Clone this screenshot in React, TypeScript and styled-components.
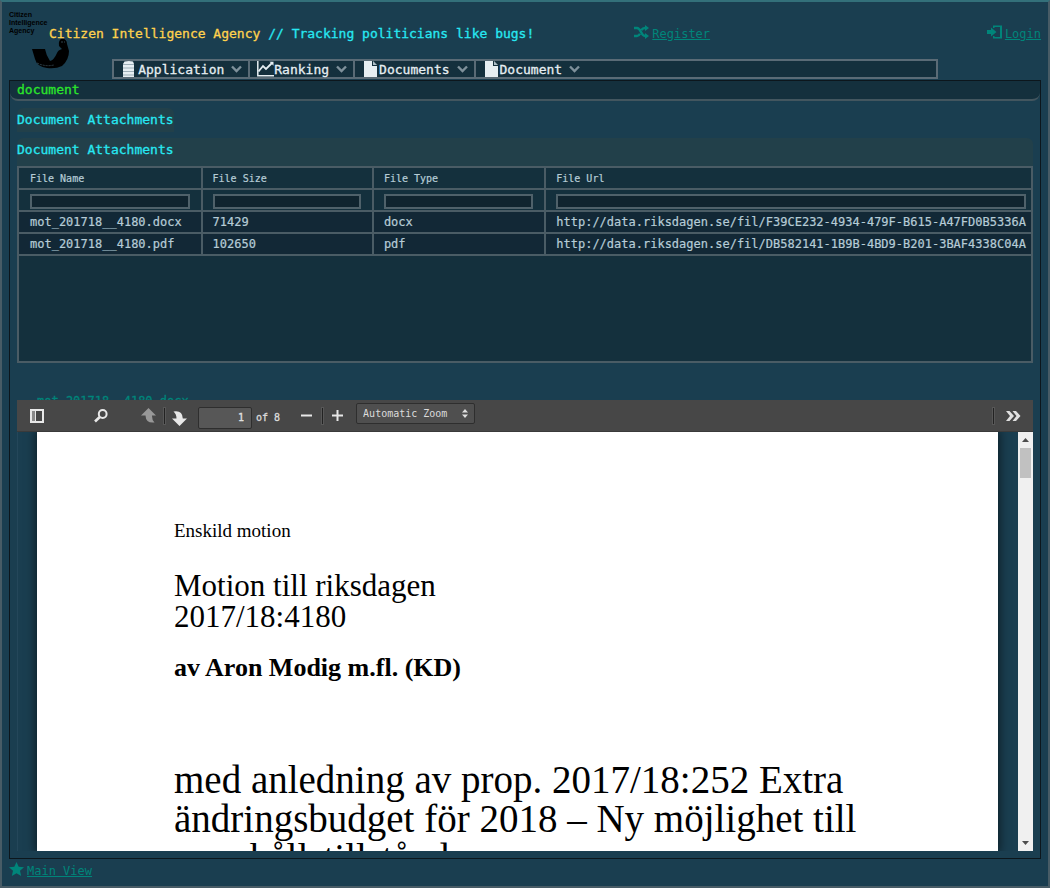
import React from "react";
import styled, { createGlobalStyle } from "styled-components";

const mono = `"DejaVu Sans Mono", "Liberation Mono", monospace`;
const serif = `"Liberation Serif", "Times New Roman", serif`;

const GlobalStyle = createGlobalStyle`
  * { box-sizing: border-box; }
  body { margin: 0; background: #1a3e50; font-family: ${mono}; }
`;

const Shell = styled.div`
  display: flex;
  flex-direction: column;
  height: 100vh;
  min-height: 600px;
  padding: 7px;
  padding-bottom: 0;
  border: 2px solid #485c66;
  border-top-color: #33707a;
  background: #1a3e50;
`;

const Header = styled.header`
  display: grid;
  grid-template-columns: 40px 59fr 41fr;
  flex: none;
  height: 50px;
`;

const LogoSlot = styled.div`
  svg { display: block; overflow: visible; }
`;

const SiteTitle = styled.h1`
  margin: 0;
  font-size: 13px;
  line-height: 50px;
  font-weight: 400;
  white-space: nowrap;
  color: #27e8f2;
  -webkit-text-stroke: 0.3px currentColor;
  strong { font-weight: inherit; color: #ffd24d; }
`;

const Account = styled.nav`
  display: flex;
  justify-content: space-between;
  align-items: flex-start;
  padding-top: 16px;
`;

const IconLink = styled.a`
  display: inline-flex;
  align-items: flex-start;
  gap: 3px;
  font-size: 12px;
  line-height: 18px;
  color: #00857a;
  text-decoration: none;
  span { text-decoration: underline; }
  svg { flex: none; }
`;

const MenuBar = styled.nav`
  display: flex;
  flex: none;
  width: 80%;
  height: 20px;
  margin: 0 auto 1px;
  border: 2px solid #5a6b76;
  background: #14303d;
`;

const MenuButton = styled.button<{ $last?: boolean }>`
  display: flex;
  align-items: flex-start;
  padding: 0 6px 0 7px;
  border: 0;
  border-right: ${(p) => (p.$last ? "0" : "2px solid #5a6b76")};
  background: none;
  font-family: ${mono};
  font-size: 13px;
  line-height: 16px;
  color: #e6eef2;
  -webkit-text-stroke: 0.3px currentColor;
  svg { flex: none; }
  svg:last-child { align-self: center; }
  span { margin-right: 7px; padding-top: 1px; }
`;

const Panel = styled.main`
  display: flex;
  flex-direction: column;
  flex: 1;
  min-height: 0;
  border: 1px solid #0c161c;
`;

const Caption = styled.div`
  flex: none;
  height: 20px;
  padding: 0 7px;
  border-bottom: 2px solid #43565f;
  border-radius: 0 0 8px 8px;
  background: #14303d;
  color: #2be62b;
  font-size: 13px;
  line-height: 18px;
  -webkit-text-stroke: 0.3px currentColor;
`;

const PanelBody = styled.div`
  display: flex;
  flex-direction: column;
  align-items: flex-start;
  flex: 1;
  min-height: 0;
  padding: 7px;
`;

const SectionLabel = styled.h2<{ $wide?: boolean }>`
  flex: none;
  width: ${(p) => (p.$wide ? "100%" : "auto")};
  height: ${(p) => (p.$wide ? 28 : 24)}px;
  margin: ${(p) => (p.$wide ? "6px 0 0" : "0")};
  border-radius: 6px 6px 0 0;
  background: #22404a;
  color: #27e8f2;
  font-size: 13px;
  line-height: 24px;
  font-weight: 400;
  -webkit-text-stroke: 0.3px currentColor;
`;

const GridFrame = styled.div`
  flex: none;
  width: 100%;
  height: 197px;
  border: 2px solid #4a5c65;
  border-top: 0;
  background: #14303d;
`;

const Grid = styled.table`
  width: calc(100% + 4px);
  margin: 0 -2px;
  border-collapse: collapse;
  table-layout: fixed;
  color: #b6ccd6;
  th, td {
    height: 22px;
    padding: 0 11px 0 10px;
    border: 2px solid #4a5c65;
    text-align: left;
    white-space: nowrap;
    font-weight: 400;
    font-size: 12px;
    line-height: 18px;
  }
  th:first-child, td:first-child { padding-left: 11px; }
  th:last-child, td:last-child { padding-right: 5px; }
  thead th, thead td { font-size: 10px; }
  thead th { padding-top: 1px; -webkit-text-stroke: 0.2px currentColor; }
  tbody td { background: #122836; -webkit-text-stroke: 0.2px currentColor; }
`;

const Column = styled.col<{ $w?: number }>`
  width: ${(p) => (p.$w ? `${p.$w}%` : "auto")};
`;

const FilterInput = styled.input`
  display: block;
  width: 100%;
  height: 15px;
  margin: 3px 0 0;
  padding: 0 4px;
  border: 2px solid #4f616a;
  border-radius: 0;
  background: #10242f;
  color: #b6ccd6;
  font: 10px ${mono};
`;

const AttachmentName = styled.div`
  flex: none;
  height: 37px;
  padding: 30px 20px 0;
  overflow: hidden;
  a {
    display: block;
    color: #00857a;
    font-size: 12px;
    line-height: 16px;
    -webkit-text-stroke: 0.3px currentColor;
  }
`;

const Viewer = styled.section`
  display: flex;
  flex-direction: column;
  flex: 1;
  width: 100%;
  min-height: 0;
`;

const Toolbar = styled.div`
  display: flex;
  align-items: center;
  flex: none;
  height: 32px;
  padding: 0 8px;
  border-bottom: 1px solid #3a3a3a;
  background: #474747;
  color: #dcdcdc;
  font-size: 10px;
`;

const ToolButton = styled.button<{ $gap?: number }>`
  display: flex;
  align-items: center;
  justify-content: center;
  width: 23px;
  height: 24px;
  margin-left: ${(p) => p.$gap ?? 0}px;
  padding: 0;
  border: 0;
  background: none;
  &:disabled { opacity: 0.5; }
`;

const Separator = styled.i<{ $push?: boolean }>`
  width: 3px;
  height: 18px;
  margin: 0 2px 0 3px;
  margin-left: ${(p) => (p.$push ? "auto" : "3px")};
  border: 1px solid #575757;
  background: #222;
`;

const PageField = styled.label`
  display: flex;
  align-items: center;
  gap: 4px;
  margin: 4px 0 0 7px;
  line-height: 20px;
  -webkit-text-stroke: 0.3px currentColor;
`;

const PageInput = styled.input`
  width: 54px;
  height: 22px;
  padding: 0 7px;
  border: 1px solid #2e2e2e;
  border-radius: 2px;
  background: #575757;
  color: #e0e0e0;
  text-align: right;
  font: 10px ${mono};
`;

const ZoomBox = styled.div`
  display: grid;
  align-items: center;
  width: 119px;
  height: 21px;
  margin: 0 0 5px 7px;
  > * { grid-area: 1 / 1; }
  svg { justify-self: end; margin-right: 7px; pointer-events: none; }
`;

const ZoomSelect = styled.select`
  appearance: none;
  width: 100%;
  height: 21px;
  padding: 0 6px;
  border: 1px solid #2e2e2e;
  border-radius: 2px;
  background: #4f4f4f;
  color: #dcdcdc;
  font: 10px ${mono};
`;

const Stage = styled.div`
  display: flex;
  flex: 1;
  min-height: 0;
  overflow: hidden;
  border-left: 1px solid #24475a;
`;

const Sheet = styled.article`
  flex: 1;
  min-width: 0;
  margin: 0 20px 0 19px;
  padding: 88px 137px 0;
  overflow: visible;
  background: #fff;
  box-shadow: 0 0 9px 2px rgba(0, 0, 0, 0.5);
  color: #000;
  font-family: ${serif};
`;

const Kind = styled.p`
  margin: 0 0 28px;
  font-size: 19px;
  line-height: 22px;
`;

const Reference = styled.p`
  margin: 0 0 20px;
  font-size: 31px;
  line-height: 31px;
`;

const Author = styled.p`
  margin: 0 0 77px;
  font-size: 26px;
  line-height: 31px;
  font-weight: 700;
`;

const DocTitle = styled.p`
  margin: 0;
  font-size: 39px;
  line-height: 39px;
  white-space: nowrap;
`;

const ScrollTrack = styled.div`
  display: flex;
  flex-direction: column;
  align-items: center;
  flex: none;
  width: 15px;
  background: #f0f0f0;
  svg { flex: none; }
`;

const ScrollThumb = styled.div`
  width: 11px;
  height: 30px;
  margin-bottom: auto;
  background: #c1c1c1;
`;

const Footer = styled.footer`
  display: flex;
  align-items: flex-start;
  flex: none;
  height: 27px;
  padding-top: 3px;
`;

const Logo = () => (
  <svg width="62" height="62" viewBox="0 0 62 62" role="img" aria-label="Citizen Intelligence Agency">
    <g fontFamily="Liberation Sans, Arial, sans-serif" fontSize="7" fontWeight="700" fill="#000">
      <text x="0" y="8">Citizen</text>
      <text x="0" y="16">Intelligence</text>
      <text x="0" y="24">Agency</text>
    </g>
    <path
      d="M23 40L36 40Q37 46 41 52Q45 51 48 44Q49 41 53 40L50 37Q49 31 53 29.500Q58 30 58 35L60 42Q60 51 53 57Q47 60 38 59Q28 58 26 50Z"
      fill="#000"
    />
    <path d="M28 54q8 4 17 2M52 33h4" stroke="#31434c" strokeWidth="1" strokeDasharray="2 1" fill="none" />
  </svg>
);

const ShuffleIcon = () => (
  <svg width="15" height="14" viewBox="0 0 15 14" fill="none" stroke="#00857a" strokeWidth="2.400">
    <path d="M0 3h3c4 0 4 8 8 8h1M0 11h3c1.500 0 2.300-1 3-2.300M7.500 5C8.300 3.700 9.500 3 11 3h1" />
    <path d="M11 0l4 3-4 3zM11 8l4 3-4 3z" fill="#00857a" stroke="none" />
  </svg>
);

const EnterIcon = () => (
  <svg width="15" height="14" viewBox="0 0 15 14" fill="#00857a">
    <path d="M0 5h4V2.500L9.500 7 4 11.500V9H0z" />
    <path d="M6 0.500v2.500h1.500V2H13v10H7.500v-1H6v2.500h9V0.500z" />
  </svg>
);

const StarIcon = () => (
  <svg width="15" height="14" viewBox="0 0 15 14" fill="#00857a">
    <path d="M7.500 0l2.200 4.700 5.300 0.500-4 3.500 1.200 5.300-4.700-2.800L2.800 14 4 8.700 0 5.200l5.300-0.500z" />
  </svg>
);

const ServerIcon = () => (
  <svg width="17" height="16" viewBox="0 0 17 16">
    <path d="M3.500 0.500Q8-0.500 12 0.500L13 3V16H2V3z" fill="#e6eef2" />
    <path d="M2 3.500h11M2 7h11M2 10.500h11M2 14h11" stroke="#7d929d" strokeWidth="0.700" />
  </svg>
);

const ChartIcon = () => (
  <svg width="17" height="16" viewBox="0 0 17 16" fill="none" stroke="#e6eef2">
    <path d="M0.800 0v14.700H17" strokeWidth="1.500" />
    <path d="M1.500 10.500L6 5l3 3 6.500-6.500" strokeWidth="1.800" />
    <path d="M12.500 0.800h4v4z" fill="#e6eef2" stroke="none" />
  </svg>
);

const FileIcon = () => (
  <svg width="17" height="16" viewBox="0 0 17 16">
    <path d="M2 0h8v5h5v11H2z" fill="#e6eef2" />
    <path d="M11 0l4 4h-4z" fill="#aebfc8" />
  </svg>
);

const Chevron = () => (
  <svg width="11" height="8" viewBox="0 0 11 8" fill="none" stroke="#7f919b" strokeWidth="2.400">
    <path d="M1 1.500l4.500 4.500L10 1.500" />
  </svg>
);

const SidebarIcon = () => (
  <svg width="14" height="14" viewBox="0 0 14 14">
    <path d="M2 2h3v10H2z" fill="#8a8a8a" />
    <path d="M0 0h14v14H0zM2 2v10h3V2zM6 2v10h6V2z" fill="#e8e8e8" fillRule="evenodd" />
  </svg>
);

const SearchIcon = () => (
  <svg width="14" height="14" viewBox="0 0 14 14" fill="none" stroke="#e8e8e8">
    <circle cx="8.700" cy="5" r="3.900" strokeWidth="2" />
    <path d="M5.800 8L1 12.500" strokeWidth="2.600" />
  </svg>
);

const UpArrow = () => (
  <svg width="15" height="15" viewBox="0 0 15 15" fill="#e8e8e8">
    <path d="M7.500 0L15 7.500H11Q10.800 12 13.500 14.500Q4.800 15.500 4.500 7.500H0z" />
  </svg>
);

const DownArrow = () => (
  <svg width="15" height="20" viewBox="0 0 15 20" fill="#e8e8e8">
    <path d="M1.500 5.500Q10.500 4 10.800 12.500H15L7.500 20 0 12.500H4.500Q4.500 8 1.500 5.500z" />
  </svg>
);

const SignIcon = ({ plus }: { plus?: boolean }) => (
  <svg width="11" height="11" viewBox="0 0 11 11" fill="#e8e8e8">
    <path d={plus ? "M0 4.500h4.500V0h2v4.500H11v2H6.500V11h-2V6.500H0z" : "M0 4.500h11v2H0z"} />
  </svg>
);

const MoreIcon = () => (
  <svg width="15" height="10" viewBox="0 0 15 10" fill="#e0e0e0">
    <path d="M0 0h3.500L8 5l-4.500 5H0l4-5zM6.500 0H10l4.500 5L10 10H6.500l4-5z" />
  </svg>
);

const SortIcon = () => (
  <svg width="6" height="9" viewBox="0 0 6 9" fill="#e0e0e0">
    <path d="M3 0l3 3.500H0zM3 9L0 5.500h6z" />
  </svg>
);

const ScrollArrow = ({ down }: { down?: boolean }) => (
  <svg width="15" height="16" viewBox="0 0 15 16" fill="#4d4d4d">
    <path d={down ? "M4 6h7l-3.500 4z" : "M4 10h7L7.500 6z"} />
  </svg>
);

const menu = [
  { label: "Application", icon: <ServerIcon /> },
  { label: "Ranking", icon: <ChartIcon /> },
  { label: "Documents", icon: <FileIcon /> },
  { label: "Document", icon: <FileIcon /> },
];

const columns = ["File Name", "File Size", "File Type", "File Url"];

const rows = [
  ["mot_201718__4180.docx", "71429", "docx", "http://data.riksdagen.se/fil/F39CE232-4934-479F-B615-A47FD0B5336A"],
  ["mot_201718__4180.pdf", "102650", "pdf", "http://data.riksdagen.se/fil/DB582141-1B9B-4BD9-B201-3BAF4338C04A"],
];

export default function App() {
  return (
    <Shell>
      <GlobalStyle />
      <Header>
        <LogoSlot><Logo /></LogoSlot>
        <SiteTitle>
          <strong>Citizen Intelligence Agency</strong> // Tracking politicians like bugs!
        </SiteTitle>
        <Account>
          <IconLink href="#register"><ShuffleIcon /><span>Register</span></IconLink>
          <IconLink href="#login"><EnterIcon /><span>Login</span></IconLink>
        </Account>
      </Header>

      <MenuBar>
        {menu.map((m, i) => (
          <MenuButton key={m.label} type="button" $last={i === menu.length - 1}>
            {m.icon}
            <span>{m.label}</span>
            <Chevron />
          </MenuButton>
        ))}
      </MenuBar>

      <Panel>
        <Caption>document</Caption>
        <PanelBody>
          <SectionLabel>Document Attachments</SectionLabel>
          <SectionLabel $wide>Document Attachments</SectionLabel>
          <GridFrame>
            <Grid>
              <colgroup>
                <Column $w={18.1} />
                <Column $w={16.9} />
                <Column $w={17} />
                <Column />
              </colgroup>
              <thead>
                <tr>{columns.map((c) => <th key={c} scope="col">{c}</th>)}</tr>
                <tr>
                  {columns.map((c) => (
                    <td key={c}><FilterInput type="text" aria-label={`Filter ${c}`} /></td>
                  ))}
                </tr>
              </thead>
              <tbody>
                {rows.map((r) => (
                  <tr key={r[0]}>{r.map((v) => <td key={v}>{v}</td>)}</tr>
                ))}
              </tbody>
            </Grid>
          </GridFrame>
          <AttachmentName><a href="#attachment">mot_201718__4180.docx</a></AttachmentName>
          <Viewer>
            <Toolbar>
              <ToolButton type="button" aria-label="Toggle sidebar"><SidebarIcon /></ToolButton>
              <ToolButton type="button" aria-label="Find" $gap={41}><SearchIcon /></ToolButton>
              <ToolButton type="button" aria-label="Previous page" $gap={25} disabled><UpArrow /></ToolButton>
              <Separator />
              <ToolButton type="button" aria-label="Next page"><DownArrow /></ToolButton>
              <PageField>
                <PageInput type="text" defaultValue="1" aria-label="Page" />
                <span>of 8</span>
              </PageField>
              <ToolButton type="button" aria-label="Zoom out" $gap={15}><SignIcon /></ToolButton>
              <Separator />
              <ToolButton type="button" aria-label="Zoom in"><SignIcon plus /></ToolButton>
              <ZoomBox>
                <ZoomSelect aria-label="Zoom" defaultValue="auto">
                  <option value="auto">Automatic Zoom</option>
                  <option value="page">Page Width</option>
                </ZoomSelect>
                <SortIcon />
              </ZoomBox>
              <Separator $push />
              <ToolButton type="button" aria-label="Tools" $gap={5}><MoreIcon /></ToolButton>
            </Toolbar>
            <Stage>
              <Sheet>
                <Kind>Enskild motion</Kind>
                <Reference>Motion till riksdagen<br />2017/18:4180</Reference>
                <Author>av Aron Modig m.fl. (KD)</Author>
                <DocTitle>
                  med anledning av prop. 2017/18:252 Extra<br />
                  ändringsbudget för 2018 – Ny möjlighet till<br />
                  uppehållstillstånd
                </DocTitle>
              </Sheet>
              <ScrollTrack>
                <ScrollArrow />
                <ScrollThumb />
                <ScrollArrow down />
              </ScrollTrack>
            </Stage>
          </Viewer>
        </PanelBody>
      </Panel>

      <Footer>
        <IconLink href="#main"><StarIcon /><span>Main View</span></IconLink>
      </Footer>
    </Shell>
  );
}
